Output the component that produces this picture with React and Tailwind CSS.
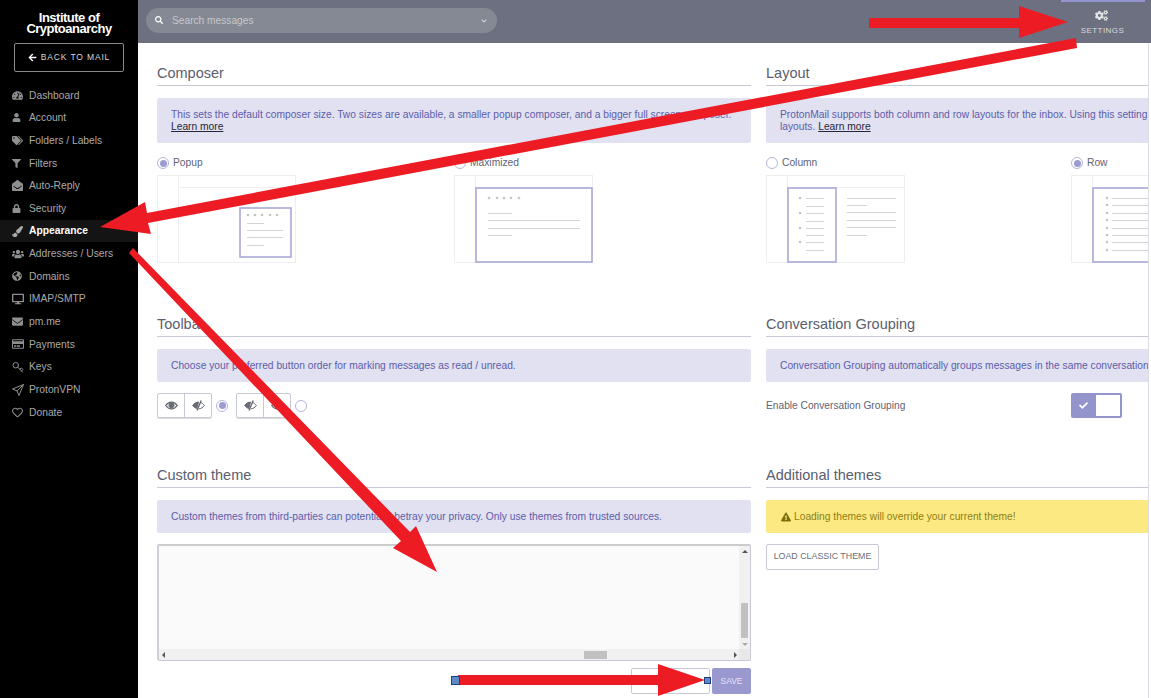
import React from 'react';
import {
    FaArrowLeft, FaCheck, FaChevronDown, FaCogs, FaDesktop, FaEnvelope, FaEnvelopeOpen,
    FaExclamationTriangle, FaFilter, FaGlobeAmericas, FaLock, FaPaintBrush,
    FaRegCreditCard, FaRegHeart, FaSearch, FaTachometerAlt, FaTags, FaUser, FaUsers,
} from 'react-icons/fa';
import { Key } from 'lucide-react';

const KeyIcon = ({ className }) => <Key size={12} className={`-scale-y-100 ${className}`} />;

const PlaneIcon = ({ className }) => (
    <svg width="12" height="12" viewBox="0 0 12 12" fill="none" stroke="currentColor" className={className}>
        <path d="M0.5 5L11.5 0.5L7 11.5L5 7Z M5 7L11.5 0.5" />
    </svg>
);

const EyeIcon = () => (
    <svg width="13" height="9" viewBox="0 0 13 9" fill="none">
        <path d="M0.7 4.5C3.8 0 9.2 0 12.3 4.5C9.2 9 3.8 9 0.7 4.5Z" fill="#f3f3f3" stroke="#5d616c" strokeWidth="1.2" />
        <circle cx="6.5" cy="4.2" r="2.9" fill="#6a6e78" />
    </svg>
);

const EyeOffIcon = () => (
    <svg width="13" height="11" viewBox="0 0 13 11" fill="none">
        <path d="M0.7 5.5C2.2 3.3 4.3 2.2 6.5 2.1L4.6 8.4C3.2 8 1.8 7 0.7 5.5Z" fill="#6a6e78" stroke="#5d616c" />
        <path d="M8 2.3C9.8 2.7 11.2 3.8 12.3 5.5C10.9 7.5 8.9 8.7 6.8 8.9" stroke="#5d616c" />
        <path d="M9.2 0.5L5 10.5" stroke="#5d616c" strokeWidth="1.3" />
    </svg>
);

const navItems = [
    { label: 'Dashboard', icon: FaTachometerAlt, size: 11 },
    { label: 'Account', icon: FaUser, size: 9 },
    { label: 'Folders / Labels', icon: FaTags, size: 11 },
    { label: 'Filters', icon: FaFilter, size: 9 },
    { label: 'Auto-Reply', icon: FaEnvelopeOpen, size: 11 },
    { label: 'Security', icon: FaLock, size: 9 },
    { label: 'Appearance', icon: FaPaintBrush, size: 11, active: true },
    { label: 'Addresses / Users', icon: FaUsers, size: 12 },
    { label: 'Domains', icon: FaGlobeAmericas, size: 10 },
    { label: 'IMAP/SMTP', icon: FaDesktop, size: 12 },
    { label: 'pm.me', icon: FaEnvelope, size: 11 },
    { label: 'Payments', icon: FaRegCreditCard, size: 12 },
    { label: 'Keys', icon: KeyIcon, size: 12 },
    { label: 'ProtonVPN', icon: PlaneIcon, size: 12 },
    { label: 'Donate', icon: FaRegHeart, size: 11 },
];

const Sidebar = () => (
    <aside className="w-[138px] shrink-0 bg-black flex flex-col">
        <div className="pt-[12px] text-center text-white text-[13px] font-semibold leading-[11px] tracking-[-0.5px]">
            Institute of<br />Cryptoanarchy
        </div>
        <button className="mx-[14px] mt-[9px] h-[29px] border border-[#8a8a8a] rounded-[2px] flex items-center justify-center gap-[4px] text-[#d8d8d8] text-[8.5px] tracking-[0.85px]">
            <FaArrowLeft size={9} className="text-white" /> BACK TO MAIL
        </button>
        <nav className="mt-[12px] flex flex-col">
            {navItems.map(({ label, icon: Icon, size, active }) => (
                <div
                    key={label}
                    className={`h-[22.65px] pl-[12px] flex items-center text-[10.3px] ${active ? 'bg-[#141414] text-white font-bold' : 'text-[#a9a9a9]'}`}
                >
                    <span className="w-[17px] shrink-0 flex">
                        <Icon size={size} className={active ? 'text-[#a9a9a9]' : 'text-[#8f8f8f]'} />
                    </span>
                    {label}
                </div>
            ))}
        </nav>
    </aside>
);

const Header = () => (
    <header className="h-[43px] shrink-0 bg-[#6c7080] flex justify-between pl-[8px] pr-[6px]">
        <div className="mt-[8px] w-[351px] h-[25px] rounded-full bg-[#858993] flex items-center justify-between pl-[9px] pr-[10px] text-[#c6c8cd]">
            <div className="flex items-center gap-[9px] text-[10.2px]">
                <FaSearch size={8} className="text-white" /> Search messages
            </div>
            <FaChevronDown size={6} className="text-[#d8d8d8]" />
        </div>
        <div className="w-[84px] flex flex-col items-center">
            <div className="w-full h-[2px] bg-[#9494cf]" />
            <FaCogs size={13} className="mt-[7px] mr-[3px] text-[#e6e6e6]" />
            <span className="mt-[3px] mr-[1px] text-[8px] tracking-[0.45px] text-[#dcdcdc]">SETTINGS</span>
        </div>
    </header>
);

const Section = ({ title, children }) => (
    <section className="min-w-0">
        <h2 className="h-[23px] border-b border-[#c9c9d6] text-[14.5px] leading-[21px] text-[#5a5e6e]">{title}</h2>
        {children}
    </section>
);

const Alert = ({ children, tall }) => (
    <div className={`mt-[12px] rounded-[2px] bg-[#e1e1f1] pl-[14px] text-[10.25px] leading-[12px] text-[#5d5dab] whitespace-nowrap overflow-hidden flex items-center ${tall ? 'h-[45px]' : 'h-[33px]'}`}>
        <div>{children}</div>
    </div>
);

const LearnMore = () => <span className="underline text-[#26263a]">Learn more</span>;

const Radio = ({ checked }) => (
    <span className="w-[12px] h-[12px] shrink-0 rounded-full border border-[#b4b4d8] bg-white flex items-center justify-center">
        {checked && <span className="w-[7px] h-[7px] rounded-full bg-[#9c9cd2]" />}
    </span>
);

// layout thumbnails
const Frame = ({ children, top = true }) => (
    <svg width="139" height="88" className="mt-[6px] block" fill="none">
        <rect x="0.5" y="0.5" width="138" height="87" stroke="#eeeeee" />
        <path d="M21.5 0V88" stroke="#eeeeee" />
        {top && <path d="M21 12.5H139" stroke="#eeeeee" />}
        {children}
    </svg>
);

const Dots = ({ xs, ys }) =>
    xs.flatMap((x) => ys.map((y) => <circle key={`${x}-${y}`} cx={x} cy={y} r="1.3" fill="#c4c4c4" />));

const Lines = ({ items }) =>
    items.map(([x1, x2, y]) => <path key={`${x1}-${y}`} d={`M${x1} ${y + 0.5}H${x2}`} stroke="#d4d4d4" />);

const PopupPreview = () => (
    <Frame>
        <rect x="83" y="33" width="51" height="49" fill="white" stroke="#a9a9da" strokeWidth="1.6" />
        <Dots xs={[91, 98, 105, 113, 120]} ys={[40]} />
        <Lines items={[[90, 107, 48], [90, 126, 55], [90, 126, 62], [90, 107, 70]]} />
    </Frame>
);

const MaximizedPreview = () => (
    <Frame>
        <rect x="22" y="13" width="116" height="74" fill="white" stroke="#a9a9da" strokeWidth="1.6" />
        <Dots xs={[35, 43, 50, 57, 65]} ys={[23]} />
        <Lines items={[[34, 58, 38], [34, 126, 45], [34, 126, 53], [34, 58, 60]]} />
    </Frame>
);

const ColumnPreview = () => (
    <Frame>
        <rect x="22" y="13" width="48" height="74" fill="white" stroke="#a9a9da" strokeWidth="1.6" />
        <Dots xs={[34]} ys={[23, 38, 53, 67]} />
        <Lines items={[23, 31, 38, 46, 53, 60, 67, 75].map((y) => [40, 58, y])} />
        <Lines items={[[81, 130, 23], [81, 101, 30], [81, 130, 37], [81, 130, 45], [81, 130, 52], [81, 101, 60]]} />
    </Frame>
);

const RowPreview = () => (
    <Frame>
        <rect x="22" y="13" width="116" height="74" fill="white" stroke="#a9a9da" strokeWidth="1.6" />
        <Dots xs={[36]} ys={[23, 30, 38, 45, 53, 60, 67, 75]} />
        <Lines items={[23, 30, 38, 45, 53, 60, 67, 75].map((y) => [41, 130, y])} />
    </Frame>
);

const Option = ({ label, checked, children }) => (
    <div>
        <label className="h-[12px] flex items-center gap-[4px] text-[10.25px] text-[#5f6373]">
            <Radio checked={checked} /> {label}
        </label>
        {children}
    </div>
);

const EyeGroup = ({ flipped }) => (
    <div className="w-[55px] h-[25px] flex border border-[#c9c9d6] rounded-[2px] shadow-[0_1px_0_#ddd]">
        <span className="flex-1 flex items-center justify-center border-r border-[#c9c9d6]">
            {flipped ? <EyeOffIcon /> : <EyeIcon />}
        </span>
        <span className="flex-1 flex items-center justify-center">
            {flipped ? <EyeIcon /> : <EyeOffIcon />}
        </span>
    </div>
);

const Arrow = ({ dir }) => {
    const shape = {
        up: 'border-x-[3px] border-x-transparent border-b-[3px] border-b-[#555]',
        down: 'border-x-[3px] border-x-transparent border-t-[3px] border-t-[#aaa]',
        left: 'border-y-[3px] border-y-transparent border-r-[3px] border-r-[#555]',
        right: 'border-y-[3px] border-y-transparent border-l-[3px] border-l-[#555]',
    };
    return <span className={`block w-0 h-0 ${shape[dir]}`} />;
};

const ThemeEditor = () => (
    <div className="mt-[11px] h-[117px] border border-[#c9c9d6] border-t-2 border-t-[#cccccc] border-l-2 border-l-[#cfcfd8] rounded-[2px] flex flex-col">
        <div className="flex-1 flex min-h-0">
            <div className="flex-1 bg-[#fafafa]" />
            <div className="w-[11px] bg-[#f1f1f1] flex flex-col items-center pt-[4px]">
                <Arrow dir="up" />
                <div className="mt-[50px] w-[7px] h-[35px] bg-[#c1c1c1]" />
                <div className="mt-[5px]"><Arrow dir="down" /></div>
            </div>
        </div>
        <div className="h-[11px] bg-[#f1f1f1] flex items-center pl-[3px]">
            <Arrow dir="left" />
            <div className="ml-[419px] w-[23px] h-[8px] bg-[#c1c1c1]" />
            <div className="ml-[127px]"><Arrow dir="right" /></div>
            <div className="ml-auto w-[11px] h-[11px] bg-[#e8e8e8]" />
        </div>
    </div>
);

const Content = () => (
    <main className="flex-1 min-h-0 flex overflow-hidden">
        <div className="w-[1010px] overflow-hidden pl-[19px] pt-[20px]">
            <div className="w-[1300px] grid grid-cols-[594px_610px] gap-x-[15px] grid-rows-[251px_151px_1fr]">
                <Section title="Composer">
                    <Alert tall>
                        This sets the default composer size. Two sizes are available, a smaller popup composer, and a bigger full screen composer.<br />
                        <LearnMore />
                    </Alert>
                    <div className="mt-[14px] grid grid-cols-2">
                        <Option label="Popup" checked><PopupPreview /></Option>
                        <Option label="Maximized"><MaximizedPreview /></Option>
                    </div>
                </Section>
                <Section title="Layout">
                    <Alert tall>
                        ProtonMail supports both column and row layouts for the inbox. Using this setting allows you to switch between these<br />
                        layouts. <LearnMore />
                    </Alert>
                    <div className="mt-[14px] grid grid-cols-2">
                        <Option label="Column"><ColumnPreview /></Option>
                        <Option label="Row" checked><RowPreview /></Option>
                    </div>
                </Section>

                <Section title="Toolbar">
                    <Alert>Choose your preferred button order for marking messages as read / unread.</Alert>
                    <div className="mt-[11px] flex items-center">
                        <EyeGroup />
                        <span className="ml-[4px]"><Radio checked /></span>
                        <span className="ml-[8px]"><EyeGroup flipped /></span>
                        <span className="ml-[4px]"><Radio /></span>
                    </div>
                </Section>
                <Section title="Conversation Grouping">
                    <Alert>Conversation Grouping automatically groups messages in the same conversation together.</Alert>
                    <div className="mt-[11px] w-[356px] flex items-center justify-between text-[10.2px] text-[#5f6373]">
                        Enable Conversation Grouping
                        <span className="w-[51px] h-[25px] rounded-[2px] bg-[#9494cc] flex items-center pl-[8px] pr-[2px]">
                            <FaCheck size={9} className="text-white" />
                            <span className="ml-auto w-[24px] h-[21px] bg-white" />
                        </span>
                    </div>
                </Section>

                <Section title="Custom theme">
                    <Alert>Custom themes from third-parties can potentially betray your privacy. Only use themes from trusted sources.</Alert>
                    <ThemeEditor />
                    <div className="mt-[7px] flex justify-end gap-[2px]">
                        <button className="w-[79px] h-[26px] bg-white border border-[#c9c9d6] rounded-[2px]" />
                        <button className="w-[39px] h-[26px] bg-[#9999cf] rounded-[2px] text-[8.5px] text-[#e4e4f6]">SAVE</button>
                    </div>
                </Section>
                <Section title="Additional themes">
                    <div className="mt-[12px] h-[33px] rounded-[2px] bg-[#fde982] pl-[15px] flex items-center gap-[3px] text-[10.25px] text-[#8f7f14]">
                        <FaExclamationTriangle size={10} className="text-[#7d6e0c]" />
                        Loading themes will override your current theme!
                    </div>
                    <button className="mt-[11px] w-[113px] h-[26px] bg-white border border-[#c9c9d6] rounded-[2px] text-[8.85px] text-[#6a6e7c]">
                        LOAD CLASSIC THEME
                    </button>
                </Section>
            </div>
        </div>
        <div className="w-[3px] bg-white border-l border-[#dddde6]" />
    </main>
);

// red annotation arrows lying over the screenshot
const Annotations = () => (
    <svg className="absolute inset-0 pointer-events-none" width="1151" height="698">
        <g fill="#ed1c24">
            <polygon points="869,18 1019,18 1019,6 1068,22 1019,38 1019,28 869,28" />
            <polygon points="1076,38 1077,48 148,223 151,234 100,227 145,202 147,213" />
            <polygon points="133,248 410,532 416,526 437,572 393,548 401,541 129,253" />
            <polygon points="458,675 658,675 658,664 705,680 658,696 658,685 458,685" />
        </g>
        <rect x="451.5" y="676.5" width="8" height="8" fill="#5b8ac7" stroke="#1f3f80" />
        <rect x="704.5" y="677.5" width="6" height="6" fill="#5b8ac7" stroke="#1f3f80" />
    </svg>
);

const App = () => (
    <div className="relative w-[1151px] h-[698px] overflow-hidden flex bg-white font-['Liberation_Sans',Arial,sans-serif]">
        <Sidebar />
        <div className="flex-1 min-w-0 flex flex-col">
            <Header />
            <Content />
        </div>
        <Annotations />
    </div>
);

export default App;
